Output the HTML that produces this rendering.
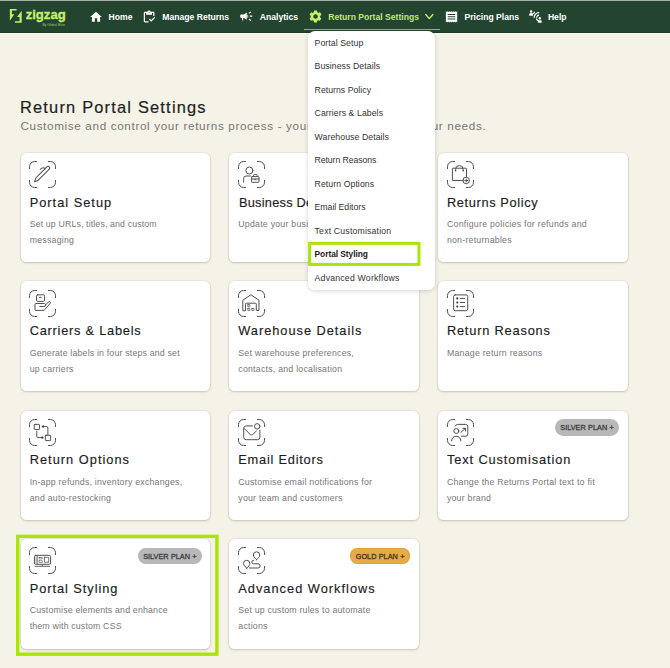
<!DOCTYPE html>
<html lang="en">
<head>
<meta charset="utf-8">
<title>Return Portal Settings</title>
<style>
*{box-sizing:border-box;margin:0;padding:0}
html,body{width:670px;height:668px;overflow:hidden}
body{position:relative;background:#f5f3e7;font-family:"Liberation Sans",sans-serif;color:#222}
.abs{position:absolute}
#topline{position:absolute;left:0;top:0;width:670px;height:1px;background:#aab2ac}
#hdr{position:absolute;left:0;top:1px;width:670px;height:32.1px;background:#234530;border-bottom:1px solid #1a3b26;box-shadow:0 1.2px 0 #fbfaf2}
.nv{position:absolute;top:1px;height:33px;line-height:33px;font-weight:bold;font-size:8.6px;color:#fff;white-space:nowrap}
.nv.act{color:#bfeb68}
.nico{position:absolute}
#lg{left:25.700px;top:6.500px;-webkit-text-stroke:.35px #c4f069;font-size:13.100px;line-height:16px;font-weight:bold;color:#c4f069;white-space:nowrap}
#lg2{left:42.400px;top:23.300px;font-size:3.400px;line-height:5px;color:#a9cf62;white-space:nowrap}
#uline{position:absolute;left:303.6px;top:28.7px;width:136.5px;height:1.5px;background:#8fbd4b}
#title{-webkit-text-stroke:.2px #1f1f1f;position:absolute;left:20px;top:97px;font-size:16.4px;line-height:20px;font-weight:normal;color:#1f1f1f;white-space:nowrap;letter-spacing:1.2px}
#sub{position:absolute;left:20.4px;top:119px;font-size:11.7px;line-height:14px;color:#777;white-space:nowrap;letter-spacing:.65px}
.card{position:absolute;width:189.8px;height:109.3px;background:#fff;border-radius:5.5px;box-shadow:0 0 0 .8px rgba(70,60,20,.07),0 1px 2.5px rgba(60,50,20,.2)}
.card svg.ic{position:absolute;left:8.6px;top:8.4px;width:27px;height:27px;overflow:visible}
.ct{position:absolute;left:9.1px;top:41.95px;-webkit-text-stroke:.16px #1d1d1d;font-size:12.8px;line-height:16px;color:#1d1d1d;white-space:nowrap;letter-spacing:.9px}
.cd{position:absolute;left:9.1px;top:63.3px;font-size:8.8px;line-height:16px;color:#777;white-space:nowrap;letter-spacing:.22px}
.bdg{position:absolute;right:8.8px;top:8.8px;height:16.9px;line-height:17.9px;border-radius:8.5px;font-size:7.3px;color:#3a3a3a;-webkit-text-stroke:.28px #3a3a3a;text-align:center;white-space:nowrap;letter-spacing:0;word-spacing:.3px}
.bdg.s{background:#b8b8b8;width:63.5px}
.bdg.g{background:#e6ab43;color:#45340c;-webkit-text-stroke-color:#45340c;width:60.2px;box-shadow:inset 0 0 0 .6px #d49b35}
#hl{position:absolute;left:16px;top:534.4px;width:202.8px;height:121px;border:3.4px solid #a6e010}
#dd{position:absolute;left:308.2px;top:30.8px;width:126.6px;height:259px;background:#fff;border-radius:7px;box-shadow:0 1px 5px rgba(0,0,0,.16)}
.di{position:absolute;left:6.4px;margin-top:-.3px;font-size:8.7px;line-height:12px;color:#333;white-space:nowrap;letter-spacing:.08px}
.di.b{font-weight:bold;color:#1a1a1a;font-size:8.4px;letter-spacing:-.05px}
#ddhl{position:absolute;left:308.1px;top:241.9px;width:112.4px;height:24.3px;border:3px solid #a6e010}
.fr{fill:none;stroke:#505050;stroke-width:1;stroke-linecap:round;stroke-linejoin:round}
</style>
</head>
<body>
<div id="topline"></div>
<div id="hdr"></div>
<svg class="abs" style="left:0;top:0" width="80" height="33" viewBox="0 0 80 33"><g fill="#c4f069"><path d="M9.850 9H16.600V10.550H11.950V14.200H14.300L10.050 20.500H9.850Z"/><path d="M21.700 11.100V22.800H14.900V21.250H19.600V16.900H17L21.500 11.100Z"/></g></svg>
<div class="abs" id="lg">zigzag</div>
<div class="abs" id="lg2">By Global Blue</div>

<svg class="abs" style="left:88.800px;top:9.950px" width="14" height="14" viewBox="0 0 24 24"><path fill="#fff" d="M10 20v-6h4v6h5v-8h3L12 3 2 12h3v8z"/></svg>
<div class="nv" style="left:108.600px">Home</div>

<svg class="abs" style="left:142.200px;top:9.700px" width="14.200" height="14.200" viewBox="0 0 24 24"><path fill="#fff" d="M5 5h2v3h10V5h2v5h2V5c0-1.100-.9-2-2-2h-4.180C14.400 1.840 13.300 1 12 1s-2.400.84-2.820 2H5c-1.100 0-2 .9-2 2v14c0 1.100.9 2 2 2h6v-2H5V5zm7-2c.55 0 1 .45 1 1s-.45 1-1 1-1-.45-1-1 .45-1 1-1z M21 11.500l-5.510 5.520-2.490-2.500-1.500 1.500 3.990 4 7.010-7.020z"/></svg>
<div class="nv" style="left:162.300px">Manage Returns</div>

<svg class="abs" style="left:239.400px;top:9.400px" width="14.400" height="14.400" viewBox="0 0 24 24"><path fill="#fff" d="M18 11v2h4v-2h-4zm-2 6.610c.96.710 2.210 1.650 3.200 2.390.4-.53.8-1.070 1.200-1.600-.99-.74-2.240-1.680-3.200-2.400-.4.540-.8 1.080-1.200 1.610zM20.400 5.600c-.4-.53-.8-1.070-1.200-1.600-.99.740-2.240 1.680-3.200 2.400.4.530.8 1.070 1.200 1.600.96-.72 2.210-1.650 3.200-2.400zM4 9c-1.100 0-2 .9-2 2v2c0 1.100.9 2 2 2h1v4h2v-4h1l5 3V6L8 9H4zm11.500 3c0-1.330-.58-2.530-1.500-3.350v6.690c.92-.81 1.500-2.010 1.500-3.340z"/></svg>
<div class="nv" style="left:259.800px">Analytics</div>

<svg class="abs" style="left:307.800px;top:9px" width="15.100" height="15.100" viewBox="0 0 24 24"><path fill="#c4f069" d="M19.140 12.940c.04-.3.060-.61.060-.94 0-.32-.02-.64-.07-.94l2.030-1.580c.18-.14.230-.41.120-.61l-1.920-3.320c-.12-.22-.37-.29-.59-.22l-2.390.96c-.5-.38-1.030-.7-1.620-.94l-.36-2.540c-.04-.24-.24-.41-.48-.41h-3.840c-.24 0-.43.170-.47.410l-.36 2.540c-.59.240-1.130.57-1.620.94l-2.390-.96c-.22-.08-.47 0-.59.220L2.740 8.870c-.12.210-.8.470.12.610l2.030 1.580c-.5.300-.9.630-.9.940s.2.640.7.940l-2.030 1.580c-.18.140-.23.410-.12.610l1.920 3.320c.12.220.37.290.59.220l2.390-.96c.5.380 1.030.7 1.620.94l.36 2.540c.5.240.24.410.48.410h3.840c.24 0 .44-.17.470-.41l.36-2.540c.59-.24 1.130-.56 1.620-.94l2.390.96c.22.080.47 0 .59-.22l1.920-3.320c.12-.22.070-.47-.12-.61l-2.010-1.580zM12 15.600c-1.980 0-3.600-1.620-3.600-3.600s1.620-3.600 3.600-3.600 3.600 1.620 3.600 3.600-1.620 3.600-3.600 3.600z"/></svg>
<div class="nv act" style="left:328.200px">Return Portal Settings</div>
<svg class="abs" style="left:424px;top:12px" width="11" height="9" viewBox="0 0 11 9"><path d="M1.700 2.500L5.300 6.600 8.900 2.500" fill="none" stroke="#c4f069" stroke-width="1.350" stroke-linecap="round" stroke-linejoin="round"/></svg>
<div id="uline"></div>

<svg class="abs" style="left:443.900px;top:9.570px" width="15.070" height="13.560" viewBox="0 0 24 24" preserveAspectRatio="none"><path fill="#fff" d="M18 17H6v-2h12v2zm0-4H6v-2h12v2zm0-4H6V7h12v2zM3 22l1.500-1.500L6 22l1.500-1.500L9 22l1.500-1.500L12 22l1.500-1.500L15 22l1.500-1.500L18 22l1.500-1.500L21 22V2l-1.500 1.500L18 2l-1.500 1.500L15 2l-1.500 1.500L12 2l-1.500 1.500L9 2 7.500 3.500 6 2 4.500 3.500 3 2v20z"/></svg>
<div class="nv" style="left:464.500px">Pricing Plans</div>

<svg class="abs" style="left:527.500px;top:9.060px" width="14.900" height="14.900" viewBox="0 0 24 24"><path fill="#fff" d="M11 14H9c0-4.970 4.030-9 9-9v2c-3.870 0-7 3.130-7 7zm7-3V9c-2.760 0-5 2.240-5 5h2c0-1.660 1.340-3 3-3zM7 4c0-1.110-.89-2-2-2s-2 .89-2 2 .89 2 2 2 2-.89 2-2zm4.450.5h-2C9.210 5.920 7.990 7 6.500 7h-3C2.670 7 2 7.670 2 8.500V11h6V8.740c1.860-.59 3.250-2.230 3.450-4.240zM19 17c1.110 0 2-.89 2-2s-.89-2-2-2-2 .89-2 2 .89 2 2 2zm1.500 1h-3c-1.490 0-2.710-1.080-2.950-2.500h-2c.2 2.010 1.590 3.650 3.450 4.240V22h6v-2.500c0-.83-.67-1.500-1.500-1.500z"/></svg>
<div class="nv" style="left:547.900px">Help</div>

<h1 id="title">Return Portal Settings</h1>
<p id="sub">Customise and control your returns process - your way, <span style="margin-left:10.700px">tailored</span> to your needs.</p>


<svg width="0" height="0" style="position:absolute"><defs>
<g id="f"><path class="fr" d="M.5 7.600V5.700A5.200 5.200 0 0 1 5.700.5H7.600M19.400.5h1.900a5.200 5.200 0 0 1 5.200 5.200V7.600M26.500 19.400v1.900a5.200 5.200 0 0 1-5.200 5.200H19.400M7.600 26.500H5.700A5.200 5.200 0 0 1 .5 21.300V19.400"/></g>
</defs></svg>

<div class="card" style="left:20.600px;top:153px;height:108.800px">
<svg class="ic" viewBox="0 0 27 27"><use href="#f"/>
<g class="fr" transform="translate(12.9 13.200) rotate(45)"><path d="M-1.700-8.800a1.700 1.700 0 0 1 3.400 0V6.800L0 10.600-1.700 6.800Z"/><path d="M-1.700-6.200C-4-6.200-4.600-4.500-4.600-2.500"/></g>
</svg>
<div class="ct" style="letter-spacing:1.00px">Portal Setup</div>
<div class="cd"><span style="letter-spacing:.125px">Set up URLs, titles, and custom</span><br>messaging</div>
</div>

<div class="card" style="left:229.200px;top:153px;height:108.800px">
<svg class="ic" viewBox="0 0 27 27"><use href="#f"/>
<g class="fr"><circle cx="11.400" cy="9.500" r="3.500"/><path d="M5.700 21.200V17.400A2.400 2.400 0 0 1 8.100 15H12.300"/><rect x="13.600" y="15.600" width="7.400" height="5.700" rx=".6"/><path d="M15.400 15.600V14.600A1 1 0 0 1 16.400 13.600H18.200A1 1 0 0 1 19.200 14.600V15.600M13.600 18H21M16.700 18.600H17.900"/></g>
</svg>
<div class="ct" style="letter-spacing:.25px;left:9.700px">Business Details</div>
<div class="cd">Update your business information</div>
</div>

<div class="card" style="left:437.800px;top:153px;height:108.800px">
<svg class="ic" style="left:9.100px" viewBox="0 0 27 27"><use href="#f"/>
<g class="fr"><path d="M16.400 19.500H6A.6.600 0 0 1 5.400 18.900V7.800A.6.600 0 0 1 6 7.200H18.900A.6.600 0 0 1 19.500 7.800V16"/><path d="M8.600 9.600V8.300A3.800 3.800 0 0 1 16.200 8.300V9.600"/><circle cx="19.200" cy="19.500" r="3.300"/><path d="M17.800 19.500H20.600M19.200 18.100V20.900"/></g>
<circle cx="8.600" cy="9.700" r=".8" fill="#4a4a4a"/><circle cx="16.200" cy="9.700" r=".8" fill="#4a4a4a"/>
</svg>
<div class="ct" style="letter-spacing:0.64px">Returns Policy</div>
<div class="cd"><span style="letter-spacing:.25px">Configure policies for refunds and</span><br>non-returnables</div>
</div>

<div class="card" style="left:20.600px;top:281.300px;height:109.800px">
<svg class="ic" viewBox="0 0 27 27"><use href="#f"/>
<g class="fr"><rect x="7.500" y="4.800" width="8.100" height="6.600" rx="1.300"/><path d="M10.500 7.300H12.300"/><path d="M10.800 16.500H14.600A1.500 1.500 0 0 0 15.600 13.500H6.600A.6.600 0 0 0 6 14.100V19.800A.6.600 0 0 0 6.600 20.400H15L21.200 13.400A1.100 1.100 0 0 0 19.600 11.900L15.800 15.800"/></g>
</svg>
<div class="ct" style="letter-spacing:0.76px">Carriers &amp; Labels</div>
<div class="cd"><span style="letter-spacing:.17px">Generate labels in four steps and set</span><br>up carriers</div>
</div>

<div class="card" style="left:229.200px;top:281.300px;height:109.800px">
<svg class="ic" viewBox="0 0 27 27"><use href="#f"/>
<g class="fr"><path d="M4.800 20.400V10.200L12.900 4.800 21 10.200V20.400H18.300V14.200A1 1 0 0 0 17.300 13.200H8.500A1 1 0 0 0 7.500 14.200V20.400Z"/><g stroke-width=".75"><rect x="9.800" y="14.600" width="2.100" height="2.100" rx=".15"/><rect x="9.800" y="18.400" width="2.100" height="2.100" rx=".15"/><rect x="13.900" y="18.400" width="2.100" height="2.100" rx=".15"/></g></g>
</svg>
<div class="ct" style="letter-spacing:0.97px">Warehouse Details</div>
<div class="cd">Set warehouse preferences,<br>contacts, and localisation</div>
</div>

<div class="card" style="left:437.800px;top:281.300px;height:109.800px">
<svg class="ic" style="left:9.100px" viewBox="0 0 27 27"><use href="#f"/>
<g class="fr"><rect x="6.600" y="4.900" width="14.100" height="15.800" rx="1.600"/><path d="M13.200 8.400H17.700M13.200 12.500H17.700M13.200 16.600H17.700"/></g>
<circle cx="10.300" cy="8.400" r="1.050" fill="#333"/><circle cx="10.300" cy="12.500" r="1.050" fill="#333"/><circle cx="10.300" cy="16.600" r="1.050" fill="#333"/>
</svg>
<div class="ct" style="letter-spacing:0.81px">Return Reasons</div>
<div class="cd">Manage return reasons</div>
</div>

<div class="card" style="left:20.600px;top:410.500px;height:109.400px">
<svg class="ic" viewBox="0 0 27 27"><use href="#f"/>
<g class="fr"><rect x="5.200" y="5.400" width="5.300" height="5.200" rx=".7"/><rect x="16.300" y="16.300" width="5.300" height="5.300" rx=".7"/><path d="M18.900 16.200V9A1.500 1.500 0 0 0 17.400 7.500H13.800"/><path d="M7.800 12.300V17.600A1 1 0 0 0 8.800 18.600H13.400"/></g>
<path d="M14.400 6.500L12.800 7.500 14.400 8.500Z" fill="#333" stroke="#333" stroke-width=".6" stroke-linejoin="round"/><path d="M12.900 17.600L14.500 18.600 12.900 19.600Z" fill="#333" stroke="#333" stroke-width=".6" stroke-linejoin="round"/>
</svg>
<div class="ct" style="letter-spacing:1.02px">Return Options</div>
<div class="cd">In-app refunds, inventory exchanges,<br>and auto-restocking</div>
</div>

<div class="card" style="left:229.200px;top:410.500px;height:109.400px">
<svg class="ic" viewBox="0 0 27 27"><use href="#f"/>
<g class="fr"><path d="M14.400 6.900H8.100A2.400 2.400 0 0 0 5.700 9.300V18.300A2.400 2.400 0 0 0 8.100 20.700H19.500A2.400 2.400 0 0 0 21.900 18.300V11.400"/><path d="M5.900 9.200L12.300 15.500A1.700 1.700 0 0 0 14.700 15.500L18.400 12"/><circle cx="19.200" cy="7.300" r="2.700"/></g>
</svg>
<div class="ct" style="letter-spacing:0.77px">Email Editors</div>
<div class="cd">Customise email notifications for<br>your team and customers</div>
</div>

<div class="card" style="left:437.800px;top:410.500px;height:109.400px">
<svg class="ic" style="left:9.100px" viewBox="0 0 27 27"><use href="#f"/>
<g class="fr"><path d="M8.400 7A2.300 2.300 0 0 1 10.600 5.400H18.500A2.300 2.300 0 0 1 20.800 7.700V14.900A2.300 2.300 0 0 1 18.500 17.200H14.400"/><circle cx="9.300" cy="12" r="2.500"/><path d="M4.600 21.800A4.700 5.300 0 0 1 13.900 21.800"/><path d="M13.800 13.500L18.500 9.400M15.800 9.300H18.600V12.100"/></g>
</svg>
<div class="bdg s">SILVER PLAN +</div>
<div class="ct" style="letter-spacing:0.90px">Text Customisation</div>
<div class="cd">Change the Returns Portal text to fit<br>your brand</div>
</div>

<div class="card" style="left:20.600px;top:538.800px;height:110px">
<svg class="ic" viewBox="0 0 27 27"><use href="#f"/>
<g class="fr"><rect x="5.400" y="8.300" width="16.200" height="9" rx="1.300"/><path d="M6 19.300H20.700" stroke-width=".9"/><path d="M13.300 17.500V19" stroke-width=".8"/><path d="M7.100 9.200V16.400" stroke="#b5b5b5" stroke-width="1.400" stroke-linecap="butt"/><path d="M8.300 8.800V16.800" stroke-width=".7"/><rect x="15.400" y="10.300" width="4.300" height="5" rx=".2" stroke-width=".8"/><rect x="10" y="10.500" width="3.400" height="1.400" rx=".2" stroke-width=".6"/><rect x="10" y="13.700" width="3.400" height="1.800" rx=".2" stroke-width=".6"/></g>
</svg>
<div class="bdg s">SILVER PLAN +</div>
<div class="ct" style="letter-spacing:0.95px">Portal Styling</div>
<div class="cd"><span style="letter-spacing:.17px">Customise elements and enhance</span><br><span style="letter-spacing:.15px">them with custom CSS</span></div>
</div>

<div class="card" style="left:229.200px;top:538.800px;height:110px">
<svg class="ic" viewBox="0 0 27 27"><use href="#f"/>
<g class="fr"><path d="M18.600 12.600C17 10.900 15.400 9.700 15.400 8A3.200 3.200 0 0 1 21.800 8C21.800 9.700 20.200 10.900 18.600 12.600Z"/><path d="M8.700 21.200C7.100 19.500 5.500 18.200 5.500 16.500A3.200 3.200 0 0 1 11.900 16.500C11.900 18.200 10.300 19.500 8.700 21.200Z"/><path d="M15.600 13.200A1.800 1.800 0 0 0 15.600 16.800H20A2.100 2.100 0 0 1 20 21H11.400"/></g>
</svg>
<div class="bdg g">GOLD PLAN +</div>
<div class="ct" style="letter-spacing:1.01px">Advanced Workflows</div>
<div class="cd"><span style="letter-spacing:.18px">Set up custom rules to automate</span><br>actions</div>
</div>

<svg class="abs" style="left:0;top:520px" width="240" height="148" viewBox="0 520 240 148"><rect x="17.700" y="536.300" width="199.200" height="117.900" fill="none" stroke="#abe508" stroke-width="3.400"/></svg>

<div id="dd">
<div class="di" style="top:6.500px">Portal Setup</div>
<div class="di" style="top:29.950px">Business Details</div>
<div class="di" style="top:53.400px;letter-spacing:.03px">Returns Policy</div>
<div class="di" style="top:76.850px">Carriers &amp; Labels</div>
<div class="di" style="top:100.300px">Warehouse Details</div>
<div class="di" style="top:123.750px;letter-spacing:-.08px">Return Reasons</div>
<div class="di" style="top:147.200px">Return Options</div>
<div class="di" style="top:170.650px;letter-spacing:-.02px">Email Editors</div>
<div class="di" style="top:194.100px;letter-spacing:.19px">Text Customisation</div>
<div class="di b" style="top:217.550px">Portal Styling</div>
<div class="di" style="top:241px;letter-spacing:.22px">Advanced Workflows</div>
</div>
<svg class="abs" style="left:300px;top:235px" width="130" height="40" viewBox="300 235 130 40"><rect x="309.600" y="243.400" width="109.350" height="21" fill="none" stroke="#abe508" stroke-width="3"/></svg>


</body>
</html>
